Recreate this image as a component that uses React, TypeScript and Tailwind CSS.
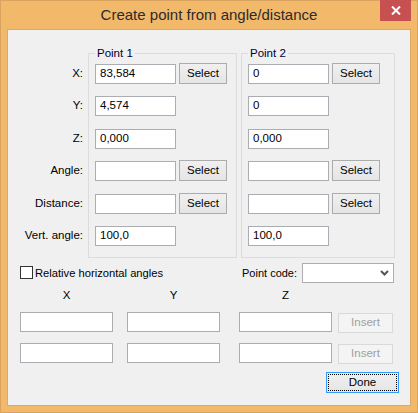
import React from "react";

const FONT = { fontFamily: '"Liberation Sans", Arial, sans-serif' };

function Input({ value = "", w = "w-[81px]" }: { value?: string; w?: string }) {
  return (
    <div className={`${w} h-[20px] bg-white border border-[#abadb3] flex items-center pl-[4px] text-[11.5px] text-black leading-none`}>
      {value}
    </div>
  );
}

function Btn({ label }: { label: string }) {
  return (
    <div className="w-[48px] h-[21px] -mt-px ml-[3px] border border-[#acacac] bg-gradient-to-b from-[#f0f0f0] to-[#e5e5e5] flex items-center justify-center text-[11.5px] text-black leading-none">
      {label}
    </div>
  );
}

function Row({ mt, value, select }: { mt: string; value?: string; select?: boolean }) {
  return (
    <div className={`flex items-start h-[20px] ${mt}`}>
      <Input value={value} />
      {select && <Btn label="Select" />}
    </div>
  );
}

function Group({ title, w, vals }: { title: string; w: string; vals: (string | undefined)[] }) {
  const mts = ["mt-0", "mt-[12px]", "mt-[13px]", "mt-[12px]", "mt-[13px]", "mt-[12px]"];
  const sel = [true, false, false, true, true, false];
  return (
    <div className={`relative ${w} h-[205px] border border-[#dcdcdc] pt-[10px] pl-[6px]`}>
      <span className="absolute left-[6px] top-[-8px] bg-[#f0f0f0] px-[2px] text-[11.5px] leading-[14px] text-[#000033]">
        {title}
      </span>
      {vals.map((v, i) => (
        <Row key={i} mt={mts[i]} value={v} select={sel[i]} />
      ))}
    </div>
  );
}

export default function App() {
  const labels = ["X:", "Y:", "Z:", "Angle:", "Distance:", "Vert. angle:"];
  const lmts = ["mt-[11px]", "mt-[12px]", "mt-[13px]", "mt-[12px]", "mt-[13px]", "mt-[12px]"];
  return (
    <div style={FONT} className="relative w-[418px] h-[413px] bg-[#f3b96b] border border-[#d8a460] flex flex-col">
      <div className="h-[28px] flex items-center justify-center text-[15px] text-[#2b2b2b] pt-[1px]">
        Create point from angle/distance
      </div>
      <div className="absolute top-[-1px] right-[6px] w-[31px] h-[21px] bg-[#c75050] flex items-center justify-center">
        <svg width="10" height="9" viewBox="0 0 10 9">
          <path d="M1 0.5 L9 8.5 M9 0.5 L1 8.5" stroke="white" strokeWidth="2" />
        </svg>
      </div>
      <div className="ml-[6px] w-[404px] h-[377px] border border-[#dcaa66] bg-[#f0f0f0] flex flex-col text-[11px] text-black whitespace-nowrap">
        <div className="flex mt-[23px]">
          <div className="w-[80px] flex flex-col items-end pr-[5px] text-[11.5px]">
            {labels.map((l, i) => (
              <div key={l} className={`h-[20px] flex items-center ${lmts[i]}`}>
                {l}
              </div>
            ))}
          </div>
          <Group title="Point 1" w="w-[149px]" vals={["83,584", "4,574", "0,000", "", "", "100,0"]} />
          <div className="w-[4px]" />
          <Group title="Point 2" w="w-[154px]" vals={["0", "0", "0,000", "", "", "100,0"]} />
        </div>
        <div className="flex items-center h-[20px] mt-[5px]">
          <div className="w-[234px] flex items-center pl-[12px]">
            <div className="w-[13px] h-[13px] bg-white border border-[#333333]" />
            <span className="ml-[2px] text-[11.2px]">Relative horizontal angles</span>
          </div>
          <span className="w-[60px] text-[11px]">Point code:</span>
          <div className="w-[92px] h-[20px] bg-white border border-[#abadb3] flex items-center justify-end pr-[4px]">
            <svg width="9" height="6" viewBox="0 0 9 6">
              <path d="M1 1 L4.5 4.5 L8 1" stroke="#555" strokeWidth="2" fill="none" />
            </svg>
          </div>
        </div>
        <div className="flex h-[16px] mt-[5px] items-center text-[11.5px]">
          <div className="ml-[12px] w-[93px] text-center">X</div>
          <div className="ml-[14px] w-[93px] text-center">Y</div>
          <div className="ml-[19px] w-[93px] text-center">Z</div>
        </div>
        {["mt-[8px]", "mt-[11px]"].map((m, i) => (
          <div key={i} className={`flex items-start h-[20px] ${m} pl-[12px]`}>
            <Input w="w-[93px]" />
            <div className="ml-[14px]"><Input w="w-[93px]" /></div>
            <div className="ml-[19px]"><Input w="w-[93px]" /></div>
            <div className="ml-[6px] w-[55px] h-[20px] mt-px border border-[#d9d9d9] bg-[#f4f4f4] flex items-center justify-center text-[11.5px] text-[#a0a0a0]">
              Insert
            </div>
          </div>
        ))}
        <div className="flex mt-[9px] pl-[318px]">
          <div className="relative w-[73px] h-[21px] border border-[#3399ff] bg-gradient-to-b from-[#f0f0f0] to-[#e5e5e5] flex items-center justify-center text-[11.5px]">
            <span className="absolute inset-[1px] border border-dotted border-black" />
            Done
          </div>
        </div>
      </div>
    </div>
  );
}
